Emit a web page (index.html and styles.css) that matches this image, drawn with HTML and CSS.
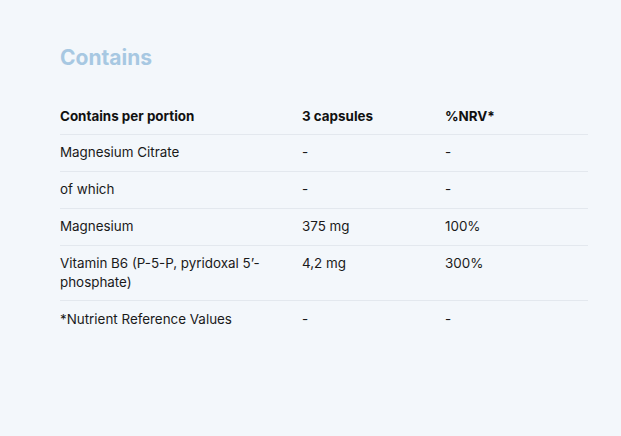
FILE: index.html
```html
<!DOCTYPE html>
<html lang="en">
<head>
<meta charset="utf-8">
<link rel="stylesheet" href="styles.css">
</head>
<body>
<section class="panel">
  <h2 class="title">Contains</h2>
  <table class="nutri">
    <thead>
      <tr><th class="c1">Contains per portion</th><th class="c2">3 capsules</th><th class="c3">%NRV*</th></tr>
    </thead>
    <tbody>
      <tr><td>Magnesium Citrate</td><td>-</td><td>-</td></tr>
      <tr><td>of which</td><td>-</td><td>-</td></tr>
      <tr><td>Magnesium</td><td>375 mg</td><td>100%</td></tr>
      <tr><td>Vitamin B6 (P-5-P, pyridoxal 5’-phosphate)</td><td>4,2 mg</td><td>300%</td></tr>
      <tr class="last"><td>*Nutrient Reference Values</td><td>-</td><td>-</td></tr>
    </tbody>
  </table>
</section>
</body>
</html>
```
FILE: styles.css
```css
html, body {
  margin: 0;
  padding: 0;
  background: #f3f7fb;
}
body {
  font-family: Inter, "Noto Sans", sans-serif;
  color: #1a1a1a;
  width: 621px;
  height: 436px;
  overflow: hidden;
}
.panel {
  padding: 45px 33px 0 60px;
}
.title {
  margin: 0 0 27px 0;
  font-size: 21px;
  line-height: 26px;
  font-weight: 700;
  color: #a7c8e2;
}
.nutri {
  width: 528px;
  border-collapse: collapse;
  font-size: 13.4px;
  line-height: 19px;
}
.nutri th, .nutri td {
  text-align: left;
  vertical-align: top;
  padding: 8.5px 0 8.4px;
  border-bottom: 1px solid #e3e8ee;
}
.nutri th {
  font-weight: 700;
  color: #111;
}
.c1 { width: 242px; }
.c2 { width: 143px; }
.nutri td:first-child { padding-right: 40px; }
.nutri tr.last td { border-bottom: none; }
```
